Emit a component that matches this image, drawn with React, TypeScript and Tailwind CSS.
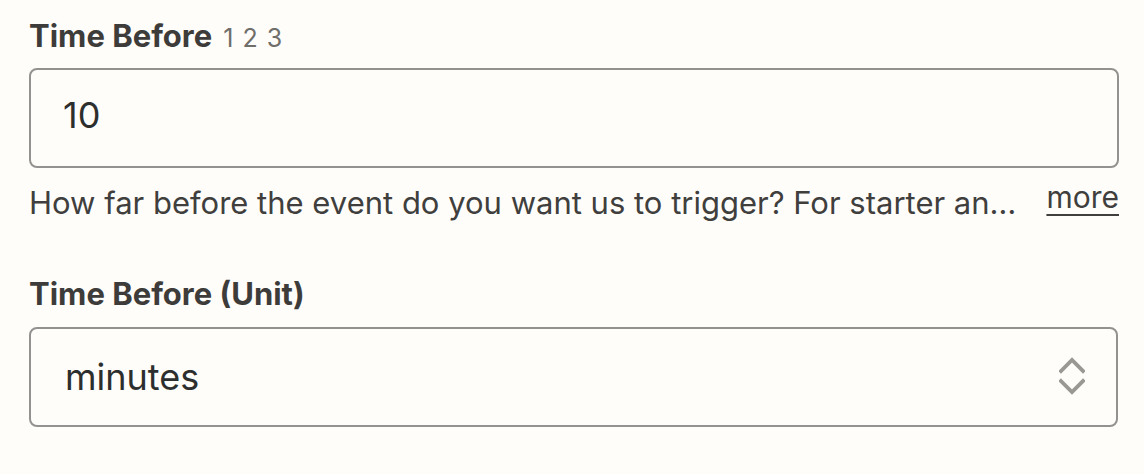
import React from 'react';

const ChevronUpDown: React.FC = () => (
  <svg width="26" height="40" viewBox="0 0 26 40" fill="none" className="shrink-0">
    <path d="M2 14 L13 3 L24 14" stroke="#9a9893" strokeWidth="3.8" strokeLinecap="square" />
    <path d="M2 24 L13 35 L24 24" stroke="#9a9893" strokeWidth="3.8" strokeLinecap="square" />
  </svg>
);

export default function App() {
  return (
    <div className="w-[1144px] h-[474px] bg-[#fffdf9] pt-[18px] pl-[29px] font-['Inter',sans-serif] text-[#403f3e]">
      <div className="w-[1090px]">
        {/* Time Before */}
        <div className="flex items-baseline h-[36px] leading-[36px]">
          <span className="text-[31px] font-bold text-[#3d3c3a]">Time Before</span>
          <span className="ml-[11px] text-[25px] text-[#6f6e6b] tracking-[1px]">1 2 3</span>
        </div>
        <input
          readOnly
          value="10"
          className="mt-[14px] block w-full h-[100px] rounded-[8px] border-2 border-[#939290] bg-[#fffdf9] pl-[32px] pb-[7px] text-[36px] text-[#2d2e2e] outline-none"
        />
        <div className="mt-[15px] flex items-start">
          <p className="flex-1 min-w-0 truncate text-[31px] leading-[40px] text-[#403f3e] mr-[28px]">
            How far before the event do you want us to trigger? For starter and professional plans, this is checked every 15 minutes.
          </p>
          <a className="text-[30px] leading-[28px] text-[#403f3e] underline underline-offset-[6px] decoration-2">more</a>
        </div>

        {/* Time Before (Unit) */}
        <div className="mt-[53px] h-[36px] leading-[36px]">
          <span className="text-[31px] font-bold text-[#3d3c3a]">Time Before (Unit)</span>
        </div>
        <div className="mt-[15px] flex items-center h-[100px] w-[1089px] rounded-[8px] border-2 border-[#939290] pl-[34px] pr-[31px]">
          <span className="flex-1 text-[36px] text-[#2d2e2e]">minutes</span>
          <ChevronUpDown />
        </div>
      </div>
    </div>
  );
}
